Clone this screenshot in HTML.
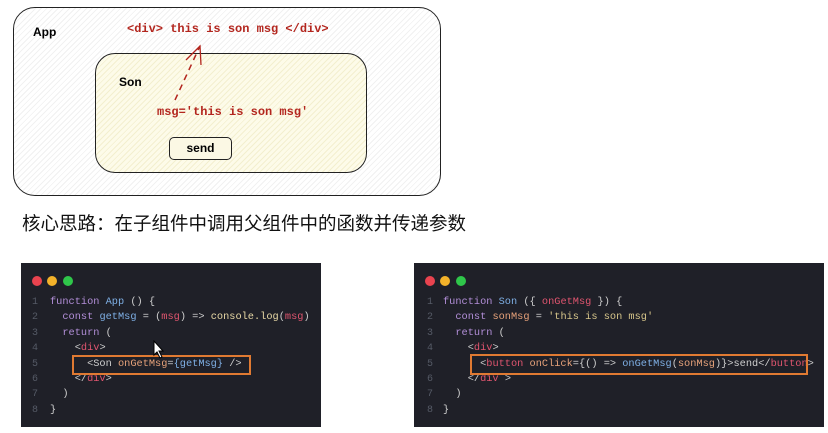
<!DOCTYPE html>
<html><head><meta charset="utf-8"><style>
body{margin:0;width:828px;height:433px;background:#fff;position:relative;overflow:hidden;font-family:"Liberation Sans",sans-serif}
.abs{position:absolute}
.mono{font-family:"Liberation Mono",monospace}
.panel{position:absolute;background:#1f2028;top:263px;height:164px}
.dot{position:absolute;top:276px;width:10px;height:10px;border-radius:50%}
.code{position:absolute;font-family:"Liberation Mono",monospace;font-size:10.3px;line-height:15.4px;white-space:pre;color:#ccc}
.ln{position:absolute;font-family:"Liberation Mono",monospace;font-size:10px;line-height:15.4px;white-space:pre;color:#555a66}
.k{color:#b38fd9}.f{color:#7fb0e6}.r{color:#e0556f}.y{color:#e8d9a6}.g{color:#d6c58a}.p{color:#cfcfcf}.o{color:#e7a27a}
.box{position:absolute;border:2px solid #e07a32}
</style></head><body>
<div class="abs" style="left:13px;top:7px;width:426px;height:187px;border:1.5px solid #222;border-radius:22px;background:repeating-linear-gradient(135deg,#fff 0 3px,#f1f1f1 3px 4px)"></div>
<div class="abs" style="left:33px;top:25px;font-size:12px;font-weight:bold">App</div>
<div class="abs" style="left:95px;top:53px;width:270px;height:118px;border:1.5px solid #222;border-radius:20px;background:repeating-linear-gradient(135deg,#fdfbe9 0 3px,#f3efcf 3px 4px)"></div>
<div class="abs" style="left:119px;top:75px;font-size:12px;font-weight:bold">Son</div>
<div class="abs mono" style="left:127px;top:22px;font-size:12px;font-weight:bold;color:#b3261e">&lt;div&gt; this is son msg &lt;/div&gt;</div>
<div class="abs mono" style="left:157px;top:105px;font-size:12px;font-weight:bold;color:#b3261e">msg='this is son msg'</div>
<div class="abs" style="left:169px;top:137px;width:61px;height:21px;border:1.3px solid #222;border-radius:5px;background:#fbf8e4;font-size:12px;font-weight:bold;text-align:center;line-height:21px">send</div>
<svg class="abs" style="left:0;top:0" width="450" height="200"><path d="M175 100 L200 46" stroke="#b3261e" stroke-width="1.5" stroke-dasharray="6 5" fill="none"/><path d="M186 60 L200 46 L201 65" stroke="#b3261e" stroke-width="1.3" fill="none"/></svg>
<div class="abs" style="left:22px;top:210px;font-size:18.5px;font-family:'Liberation Sans','Noto Sans CJK SC',sans-serif;color:#111">核心思路：在子组件中调用父组件中的函数并传递参数</div>

<div class="panel" style="left:21px;width:300px"></div>
<div class="dot" style="left:32px;background:#e9434f"></div><div class="dot" style="left:47px;background:#f3b22a"></div><div class="dot" style="left:63px;background:#2fc64a"></div>
<div class="ln" style="left:32px;top:295px">1
2
3
4
5
6
7
8</div>
<div class="code" style="left:50px;top:295px"><span class="k">function</span> <span class="f">App</span> <span class="p">() {</span>
  <span class="k">const</span> <span class="f">getMsg</span> <span class="p">=</span> <span class="p">(</span><span class="r">msg</span><span class="p">) =&gt;</span> <span class="y">console.log</span><span class="p">(</span><span class="r">msg</span><span class="p">)</span>
  <span class="k">return</span> <span class="p">(</span>
    <span class="p">&lt;</span><span class="r">div</span><span class="p">&gt;</span>
      <span class="p">&lt;Son</span> <span class="o">onGetMsg</span><span class="p">=</span><span class="f">{getMsg}</span> <span class="p">/&gt;</span>
    <span class="p">&lt;/</span><span class="r">div</span><span class="p">&gt;</span>
  <span class="p">)</span>
<span class="p">}</span></div>
<div class="box" style="left:72px;top:355px;width:175px;height:16px"></div>

<div class="panel" style="left:414px;width:410px"></div>
<div class="dot" style="left:425px;background:#e9434f"></div><div class="dot" style="left:440px;background:#f3b22a"></div><div class="dot" style="left:456px;background:#2fc64a"></div>
<div class="ln" style="left:427px;top:295px">1
2
3
4
5
6
7
8</div>
<div class="code" style="left:443px;top:295px"><span class="k">function</span> <span class="f">Son</span> <span class="p">({</span> <span class="r">onGetMsg</span> <span class="p">}) {</span>
  <span class="k">const</span> <span class="o">sonMsg</span> <span class="p">=</span> <span class="g">'this is son msg'</span>
  <span class="k">return</span> <span class="p">(</span>
    <span class="p">&lt;</span><span class="r">div</span><span class="p">&gt;</span>
      <span class="p">&lt;</span><span class="r">button</span> <span class="o">onClick</span><span class="p">={() =&gt;</span> <span class="f">onGetMsg</span><span class="p">(</span><span class="o">sonMsg</span><span class="p">)}&gt;send&lt;/</span><span class="r">button</span><span class="p">&gt;</span>
    <span class="p">&lt;/</span><span class="r">div</span> <span class="p">&gt;</span>
  <span class="p">)</span>
<span class="p">}</span></div>
<div class="box" style="left:470px;top:354px;width:334px;height:17px"></div>

<svg class="abs" style="left:152px;top:340px" width="14" height="20"><path d="M2 1 L2 15 L5 12 L8 18 L10 17 L7 11 L11 11 Z" fill="#fff" stroke="#000" stroke-width="1"/></svg>
</body></html>
